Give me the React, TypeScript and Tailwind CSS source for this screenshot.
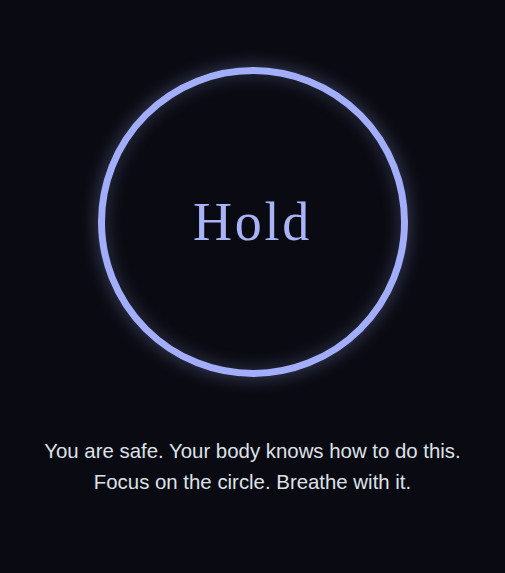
export default function App() {
  return (
    <div className="flex min-h-[573px] w-full flex-col items-center bg-[#0a0b12] pt-[67px] font-['Liberation_Sans',Arial,sans-serif]">
      <div className="flex size-[310px] items-center justify-center rounded-full border-[7px] border-[#a3aefb] shadow-[0_0_18px_rgba(163,174,251,0.35),inset_0_0_18px_rgba(163,174,251,0.25)]">
        <span className="font-['Liberation_Serif',serif] text-[54px] leading-none tracking-[0.05em] text-[#a9b4f6]">
          Hold
        </span>
      </div>
      <div className="mt-[59px] text-center text-[20.4px] leading-[31px] text-[#dfe1e8]">
        <p>You are safe. Your body knows how to do this.</p>
        <p>Focus on the circle. Breathe with it.</p>
      </div>
    </div>
  );
}
